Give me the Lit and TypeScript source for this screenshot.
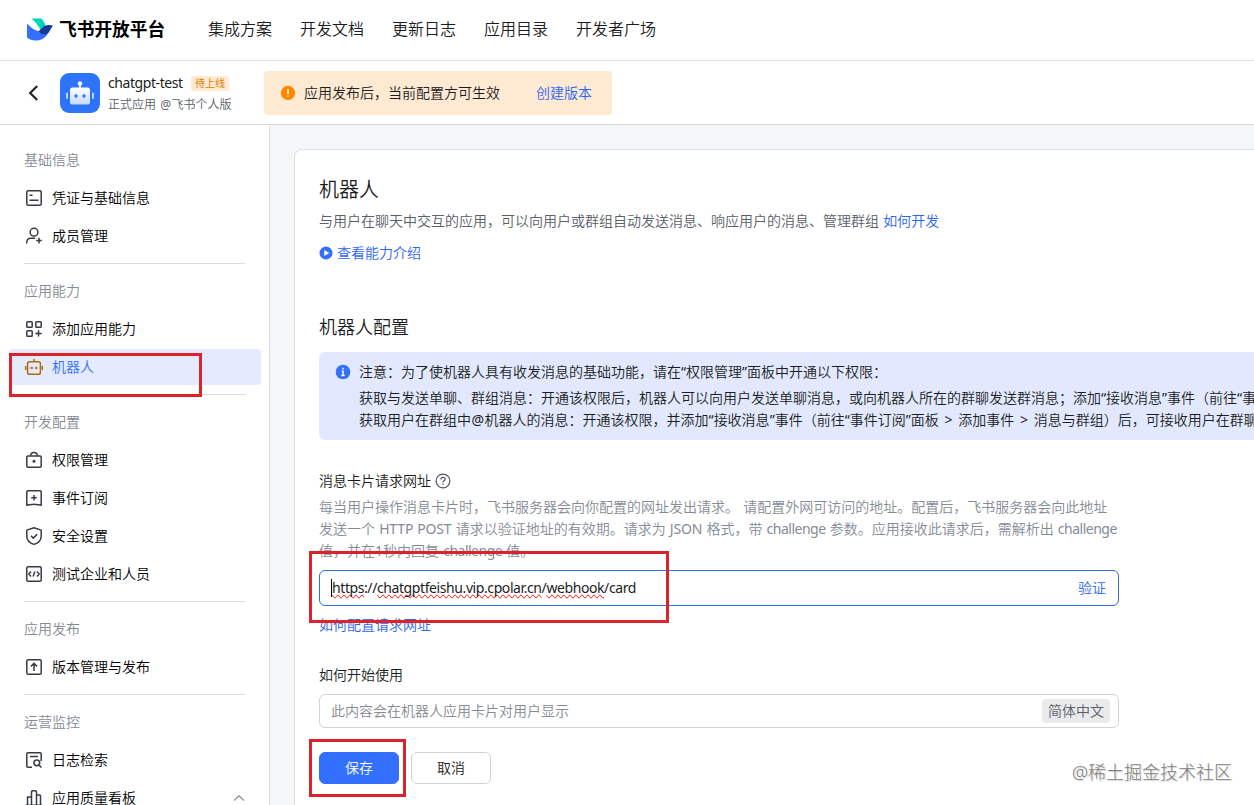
import { LitElement, html, css, svg } from "lit";
import { customElement, property } from "lit/decorators.js";
import { classMap } from "lit/directives/class-map.js";

const icons: Record<string, unknown> = {
  card: svg`<rect x="1.8" y="1.8" width="14.4" height="14.4" rx="1.3"/><path d="M4.5 6.2h3M4.5 11.3h9"/>`,
  member: svg`<circle cx="9" cy="5.2" r="3.9"/><path d="M1.800 16.500v-1.200c0-2.400 1.600-4 4-4h4.400M14 10.800v5.600M11.200 13.600h5.600"/>`,
  add: svg`<rect x="1.8" y="1.8" width="5.4" height="5.4" rx=".8"/><rect x="10.8" y="1.8" width="5.4" height="5.4" rx=".8"/><rect x="1.8" y="10.8" width="5.4" height="5.4" rx=".8"/><path d="M13.5 10.2v6.400M10.300 13.400h6.400"/>`,
  robot: svg`<rect x="2.600" y="3.800" width="12.800" height="12.400" rx="1.800"/><path d="M9 3.800V1M.7 8v4M17.300 8v4"/><circle cx="6.700" cy="10" r=".5"/><circle cx="11.300" cy="10" r=".5"/>`,
  lock: svg`<rect x="1.800" y="5" width="14.400" height="11.200" rx="1.200"/><path d="M5.500 4.800C5.700 2.600 7 1.400 9 1.400s3.300 1.200 3.500 3.400"/><circle cx="9" cy="10.300" r=".8"/>`,
  event: svg`<path d="M1.800 16.200V3c0-.7.5-1.200 1.200-1.200h12c.7 0 1.200.5 1.200 1.200v13.200C13.600 15.900 11.500 15.200 9 15.200s-4.600.7-7.200 1zM9 6v5.600M6.200 8.800h5.600"/>`,
  shield: svg`<path d="M9 .8l7.200 2.300v6.100c0 4-3.400 6.900-7.200 8.200-3.800-1.300-7.200-4.200-7.200-8.200V3.100z"/><path d="M6 8.800l2.300 2.300 3.900-3.900"/>`,
  code: svg`<rect x="1.800" y="1.800" width="14.400" height="14.400" rx="1.300"/><path d="M6 6.500L3.800 9 6 11.500M12 6.500L14.200 9 12 11.500M9.900 6.400l-1.800 5.200"/>`,
  publish: svg`<rect x="1.800" y="1.800" width="14.400" height="14.400" rx="1.300"/><path d="M9 13V5.600M6 8.400l3-3 3 3"/>`,
  log: svg`<path d="M7 16.200H3c-.7 0-1.200-.5-1.200-1.200V3c0-.7.5-1.200 1.200-1.200h12c.7 0 1.200.5 1.200 1.200v7M5 5.400h8"/><circle cx="11.800" cy="11.800" r="2.900"/><path d="M14 14l2.500 2.500"/>`,
  chart: svg`<path d="M.8 16.200h16.400M2.500 16V8h4v8M6.500 16V3c0-.7.5-1.200 1.200-1.200h2.600c.7 0 1.200.5 1.200 1.200v13M11.500 6h3.200c.5 0 .8.3.8.8V16"/>`,
};

interface Entry { icon: string; label: string; active?: boolean; open?: boolean }
const groups: { title: string; items: Entry[] }[] = [
  { title: "基础信息", items: [{ icon: "card", label: "凭证与基础信息" }, { icon: "member", label: "成员管理" }] },
  { title: "应用能力", items: [{ icon: "add", label: "添加应用能力" }, { icon: "robot", label: "机器人", active: true }] },
  {
    title: "开发配置",
    items: [
      { icon: "lock", label: "权限管理" },
      { icon: "event", label: "事件订阅" },
      { icon: "shield", label: "安全设置" },
      { icon: "code", label: "测试企业和人员" },
    ],
  },
  { title: "应用发布", items: [{ icon: "publish", label: "版本管理与发布" }] },
  { title: "运营监控", items: [{ icon: "log", label: "日志检索" }, { icon: "chart", label: "应用质量看板", open: true }] },
];

@customElement("side-nav")
export class SideNav extends LitElement {
  @property({ attribute: false }) groups = groups;

  static styles = css`
    :host { display: block; width: 269px; flex: none; background: #fff; border-right: 1px solid #dcdee1; padding-top: 16px; box-sizing: content-box; overflow: hidden; }
    .group { display: flex; flex-direction: column; margin: 0 24px; padding-bottom: 8px; }
    .group + .group { border-top: 1px solid #d9dbde; padding-top: 8px; }
    .title { height: 38px; line-height: 38px; color: #858b94; }
    .item { height: 36px; margin: 1px -16px 1px -15px; padding: 0 15px; display: flex; align-items: center; border-radius: 4px; color: #000; }
    .item svg { width: 20px; height: 20px; margin-right: 8px; flex: none; fill: none; stroke: #373c43; stroke-width: 1.500; stroke-linejoin: round; }
    .item.active { background: #e4ebfe; color: #3370ff; }
    .item.active svg { stroke: #b5690f; }
    .item svg.caret { width: 12px; height: 12px; margin: 0 1px 0 auto; stroke: #8f959e; stroke-width: 1.300; }
  `;

  render() {
    return this.groups.map((g) => html`
      <div class="group">
        <div class="title">${g.title}</div>
        ${g.items.map((i) => html`
          <div class=${classMap({ item: true, active: !!i.active })}>
            <svg viewBox="-1 -1 20 20">${icons[i.icon]}</svg>
            <span>${i.label}</span>
            ${i.open ? html`<svg class="caret" viewBox="0 0 12 12"><path d="M1.200 8.500L6 3.700l4.800 4.800"/></svg>` : ""}
          </div>`)}
      </div>`);
  }
}

@customElement("app-root")
export class AppRoot extends LitElement {
  static styles = css`
    :host { display: flex; flex-direction: column; position: relative; width: 100%; height: 805px; overflow: hidden; background: #fff; color: #1a1d22; font: 350 14px/22px "Noto Sans", "Noto Sans CJK SC", sans-serif; white-space: nowrap; word-spacing: 0.500px; }
    .top { height: 60px; flex: none; border-bottom: 1px solid #dee0e3; display: flex; align-items: center; padding-left: 26px; }
    .logo { width: 28px; height: 24px; margin-right: 5px; }
    .brand { font-size: 17.700px; font-weight: 700; color: #000; width: 107px; margin-right: 42px; line-height: 24px; padding-bottom: 2px; }
    .menu { display: flex; gap: 28px; font-size: 16px; padding-bottom: 2px; }
    .sub { height: 63px; flex: none; border-bottom: 1px solid #d6d8db; display: flex; align-items: center; padding-left: 26px; }
    .back { width: 14px; height: 18px; margin-right: 20px; }
    .avatar { width: 40px; height: 40px; margin-right: 8px; }
    .info { width: 156px; padding-top: 2px; }
    .name { display: flex; align-items: center; height: 21px; }
    .name .lat { width: 75px; margin-right: 8px; letter-spacing: -0.420px; }
    .tag { font-size: 10px; line-height: 15px; font-weight: 400; color: #dc7a04; background: #feead2; border-radius: 3px; padding: 0 4px; width: 30px; }
    .desc { font-size: 12px; line-height: 21px; color: #5a6069; }
    .notice { height: 44px; width: 348px; box-sizing: border-box; border-radius: 4px; background: #feead2; display: flex; align-items: center; padding-left: 16px; }
    .notice svg { width: 16px; height: 16px; margin-right: 8px; }
    .blue { color: #2b66f6; }
    .notice .blue { margin-left: 36px; }
    .body { flex: 1; min-height: 0; display: flex; background: #f5f6f7; }
    .page { flex: 1; min-width: 0; margin: 24px 0 0 24px; padding: 28px 0 0 24px; border: 1px solid #dee0e3; border-width: 1px 0 0 1px; border-radius: 8px 0 0 0; background: #fff; overflow: hidden; }
    .h1 { font-size: 20px; line-height: 24px; }
    .lead { margin-top: 8px; color: #5a6069; }
    .intro { margin-top: 10px; display: flex; align-items: center; }
    .intro svg { width: 14px; height: 14px; margin-right: 4px; }
    .h2 { margin-top: 50px; font-size: 18px; line-height: 26px; }
    .alert { margin-top: 12px; height: 88px; box-sizing: border-box; background: #e2e9fe; border-radius: 6px 0 0 6px; padding: 9px 0 0 16px; display: flex; }
    .alert svg { width: 16px; height: 16px; margin: 3px 8px 0 0; flex: none; }
    .alert .first { margin-bottom: 4px; }
    .sym { font-weight: 400; }
    .at { padding: 0 0.500px; }
    .gt { padding: 0 1.600px; }
    .label { margin-top: 30px; display: flex; align-items: center; }
    .label svg { width: 16px; height: 16px; margin-left: 4px; }
    .hint { margin-top: 4px; color: #858b94; height: 66px; }
    .lat { letter-spacing: -0.500px; font-weight: 400; }
    .caps { letter-spacing: -0.150px; font-weight: 400; }
    .field { width: 800px; box-sizing: border-box; border: 1px solid #d0d3d6; border-radius: 6px; display: flex; align-items: center; justify-content: space-between; padding: 0 12px 0 11px; }
    .focus { height: 36px; margin-top: 8px; border-color: #3370d8; }
    .url { box-shadow: -1px 0 0 #000; margin-left: 1px; line-height: 18px; letter-spacing: -0.410px; font-weight: 400; }
    .wavy { text-decoration-line: spelling-error; }
    .help { margin-top: 8px; }
    .label2 { margin-top: 28px; }
    .plain { height: 34px; margin-top: 8px; padding-right: 8px; color: #858b94; }
    .lang { background: #e9eaeb; color: #5a6069; border-radius: 4px; line-height: 24px; padding: 0 6px; }
    .actions { display: flex; gap: 12px; margin-top: 24px; }
    .btn { width: 80px; height: 32px; box-sizing: border-box; border: 1px solid #d0d3d6; border-radius: 6px; text-align: center; line-height: 30px; }
    .primary { background: #3370ff; border-color: #3370ff; color: #fff; }
    .mark { position: absolute; box-sizing: border-box; border: 3px solid #dc232b; }
    .mark-nav { left: 9px; top: 353px; width: 193px; height: 44px; }
    .mark-url { left: 309px; top: 551px; width: 360px; height: 72px; }
    .mark-save { left: 309px; top: 739px; width: 97px; height: 58px; }
    .water { position: absolute; right: 22px; bottom: 20px; font-size: 18px; line-height: 26px; font-weight: 300; color: #808080; text-shadow: 1px 1px 1px #ccc; }
  `;

  render() {
    const lat = (t: string) => html`<span class="lat">${t}</span>`;
    const caps = (t: string) => html`<span class="caps">${t}</span>`;
    const wavy = (t: string) => html`<span class="wavy">${t}</span>`;
    const quote = (t: string) => html`<span class="sym">“</span>${t}<span class="sym">”</span>`;
    const gt = html`<span class="sym gt"> &gt; </span>`;
    return html`
      <div class="top">
        <svg class="logo" viewBox="0 0 28 24">
          <path d="M5.500 .5h10c2 2 3.300 4.500 4 7.500l-4.500 5C12.500 7.500 9.500 4 5.500 .5z" fill="#00d6b9"/>
          <path d="M1 5.500c3.500 4 8 7 13 8l7.500 2.500C18.500 21 14 22.500 9.500 22.500 6 22.500 3.200 21.500 1 19.500z" fill="#3370ff"/>
          <path d="M12.500 13.200c3-2 4.500-5.500 8.500-6 2.300-.3 4.200-.1 6 .6-2 2-2.700 5-4.700 7.200-2.500 2.800-6.500 1.500-9.800-1.800z" fill="#133c9a"/>
        </svg>
        <div class="brand">飞书开放平台</div>
        <div class="menu">
          <span>集成方案</span><span>开发文档</span><span>更新日志</span><span>应用目录</span><span>开发者广场</span>
        </div>
      </div>
      <div class="sub">
        <svg class="back" viewBox="0 0 14 18"><path d="M11.200 2L4.200 9l7 7" fill="none" stroke="#1f2329" stroke-width="2.200"/></svg>
        <svg class="avatar" viewBox="0 0 40 40">
          <defs><linearGradient id="face" x2="0" y2="1"><stop stop-color="#fff"/><stop offset="1" stop-color="#c5d8ff"/></linearGradient></defs>
          <rect width="40" height="40" rx="9" fill="#2e74fb"/>
          <circle cx="20" cy="10.500" r="2.200" fill="#fff"/><path d="M20 11v4" stroke="#fff" stroke-width="1.500"/>
          <rect x="10" y="14.500" width="20" height="17" rx="2.500" fill="url(#face)"/>
          <path d="M7 20.500v4.500M33 20.500v4.500" stroke="#b9d2ff" stroke-width="2" stroke-linecap="round"/>
          <circle cx="16" cy="23" r="1.700" fill="#2e74fb"/><circle cx="24" cy="23" r="1.700" fill="#2e74fb"/>
        </svg>
        <div class="info">
          <div class="name"><span class="lat">chatgpt-test</span><span class="tag">待上线</span></div>
          <div class="desc">正式应用 <span class="sym at">@</span>飞书个人版</div>
        </div>
        <div class="notice">
          <svg viewBox="0 0 16 16"><circle cx="8" cy="8" r="7.200" fill="#ff8800"/><path d="M8 4v5M8 10.500V12" stroke="#fff" stroke-width="1.500"/></svg>
          <span>应用发布后，当前配置方可生效</span><span class="blue">创建版本</span>
        </div>
      </div>
      <div class="body">
        <side-nav></side-nav>
        <div class="page">
          <div class="h1">机器人</div>
          <div class="lead">与用户在聊天中交互的应用，可以向用户或群组自动发送消息、响应用户的消息、管理群组 <span class="blue">如何开发</span></div>
          <div class="intro blue">
            <svg viewBox="0 0 14 14"><circle cx="7" cy="7" r="6.500" fill="#3370ff"/><path d="M5.300 4v6L10.300 7z" fill="#fff"/></svg>查看能力介绍
          </div>
          <div class="h2">机器人配置</div>
          <div class="alert">
            <svg viewBox="0 0 16 16"><circle cx="8" cy="8" r="7.300" fill="#3370ff"/><path d="M8 3.700v1.700M6.700 7.200H8v4.300M6.300 11.500h3.400" stroke="#fff" stroke-width="1.400" fill="none"/></svg>
            <div>
              <div class="first">注意：为了使机器人具有收发消息的基础功能，请在${quote("权限管理")}面板中开通以下权限：</div>
              <div>获取与发送单聊、群组消息：开通该权限后，机器人可以向用户发送单聊消息，或向机器人所在的群聊发送群消息；添加${quote("接收消息")}事件（前往<span class="sym">“</span>事</div>
              <div>获取用户在群组中<span class="sym at">@</span>机器人的消息：开通该权限，并添加${quote("接收消息")}事件（前往${quote("事件订阅")}面板${gt}添加事件${gt}消息与群组）后，可接收用户在群聊</div>
            </div>
          </div>
          <div class="label">消息卡片请求网址
            <svg viewBox="0 0 16 16" fill="none" stroke="#51565d" stroke-width="1.200"><circle cx="8" cy="8" r="6.900"/><path d="M5.900 6.500c0-1.300.9-2.100 2.100-2.100s2.100.8 2.100 1.900c0 1.500-2.100 1.600-2.100 3.200M8 10.700v1.200"/></svg>
          </div>
          <div class="hint">
            <div>每当用户操作消息卡片时，飞书服务器会向你配置的网址发出请求。 请配置外网可访问的地址。配置后，飞书服务器会向此地址</div>
            <div>发送一个 ${caps("HTTP POST")} 请求以验证地址的有效期。请求为 ${caps("JSON")} 格式，带 ${lat("challenge")} 参数。应用接收此请求后，需解析出 ${lat("challenge")}</div>
            <div>值，并在<span class="sym">1</span>秒内回复 ${lat("challenge")} 值。</div>
          </div>
          <div class="field focus">
            <span class="url">${wavy("https")}://${wavy("chatgptfeishu.vip.cpolar.cn")}/${wavy("webhook")}/card</span>
            <span class="blue">验证</span>
          </div>
          <div class="help blue">如何配置请求网址</div>
          <div class="label2">如何开始使用</div>
          <div class="field plain"><span>此内容会在机器人应用卡片对用户显示</span><span class="lang">简体中文</span></div>
          <div class="actions"><div class="btn primary">保存</div><div class="btn">取消</div></div>
        </div>
      </div>
      <div class="mark mark-nav"></div>
      <div class="mark mark-url"></div>
      <div class="mark mark-save"></div>
      <div class="water">@稀土掘金技术社区</div>
    `;
  }
}
